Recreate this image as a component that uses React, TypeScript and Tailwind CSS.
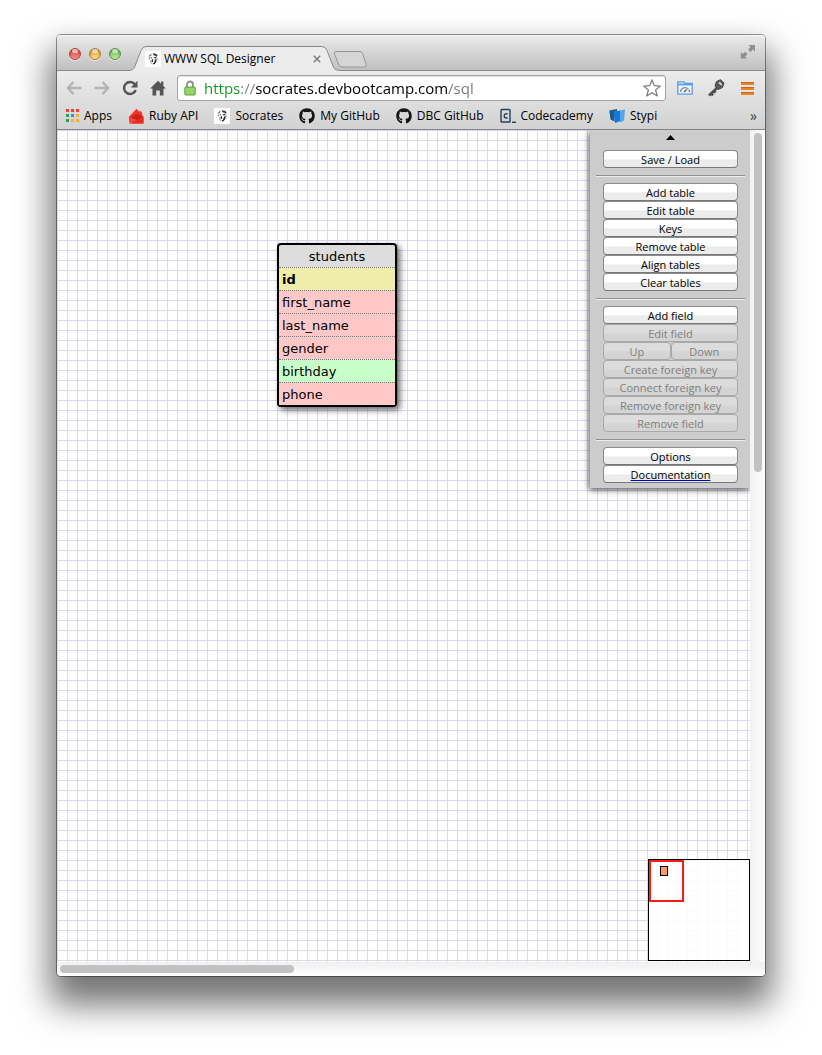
import type { ReactNode } from "react";
import { FaGithub } from "react-icons/fa";

const ui = "font-['Open_Sans','Noto_Sans',sans-serif]";

function TrafficLight({ label, className }: { label: string; className: string }) {
  return (
    <button
      type="button"
      aria-label={label}
      className={`relative size-3 rounded-full border shadow-[0_1px_0_#ffffff99,inset_0_1px_2px_#00000055] ${className}`}
    >
      <span className="absolute left-[2px] top-0 h-[4px] w-[6px] rounded-full bg-white/60" />
    </button>
  );
}

function PortraitIcon() {
  return (
    <svg viewBox="0 0 16 16" className="size-4 shrink-0 bg-white" aria-hidden="true">
      <path d="M3.500 5 5.500 3l1.500.5-1 1.500-1.500.7zM3.500 6.500l1.300-.3.4 1.800-1.200.3z" fill="#888" />
      <path d="M7.500 2.800c2-.8 4.400-.2 5 1.700l-.6 1.500-1.200-1.200-1.700-.4zM5.800 6.200l1.500.2-.2.900-1.200.2zM9 6.300l2-.5.3 1.200-1.500.8z" fill="#333" />
      <path d="m6.800 8.500 1-.5.4 2.300-.9.900-.8-.8zM10 8.800l1.600-1-.2 2.600-1.600 2.500-1.700.7-.4-1 1.400-.8z" fill="#222" />
      <path d="m5 9 1 2 .8 2.200-1.300-1.500zM11.800 6.500l.8.500-.3 2zM8.300 5.500l.6 3" fill="#999" stroke="#aaa" strokeWidth=".4" />
    </svg>
  );
}

function AppsIcon() {
  const colors = ["#ee3f3a", "#ee3f3a", "#ee3f3a", "#2f9e58", "#2f8cf0", "#fbb02c", "#2f9e58", "#fbb02c", "#fbb02c"];
  return (
    <svg viewBox="0 0 14 14" className="size-3.5 shrink-0" aria-hidden="true">
      {colors.map((c, i) => (
        <rect key={i} x={(i % 3) * 5 + 1} y={Math.floor(i / 3) * 5} width="3" height="3" fill={c} />
      ))}
    </svg>
  );
}

function RubyIcon() {
  return (
    <svg viewBox="0 0 16 16" className="size-4 shrink-0" aria-hidden="true">
      <path d="M.8 9 8.500.8l3 3.200L12 2.500l2 2 .5 3.500 1 .5V15.500H1.500z" fill="#f4352a" />
      <path d="m3 9 6-3.500L14.500 8 12 14H3z" fill="#cf201a" />
      <path d="m9 12 6.500-3.500v7H2.500z" fill="#e82c22" />
      <path d="M1.500 9.500 9 12l-6.500 3.500z" fill="#f4483a" />
    </svg>
  );
}

function CodecademyIcon() {
  return (
    <svg viewBox="0 0 16 16" className="size-4 shrink-0" fill="none" stroke="#23405a" aria-hidden="true">
      <rect x="1" y="1.500" width="9" height="12.500" rx=".8" strokeWidth="1.400" />
      <path d="M7.600 6.300c-1.200-1-3.400-.5-3.400 1.600s2.200 2.700 3.400 1.600" strokeWidth="1.400" />
      <path d="M12 14.300h4" strokeWidth="1.400" />
    </svg>
  );
}

function StypiIcon() {
  return (
    <svg viewBox="0 0 16 16" className="size-4 shrink-0" aria-hidden="true">
      <path d="M.3 2.500 8 1v2L5.500 4v9.500L1.500 11.500z" fill="#1b5a93" />
      <path d="m4.500 3.500 7-1v10.500L6 15z" fill="#1379d8" />
      <path d="m11 2.500 5-1-1 11-4 2z" fill="#56a4ea" />
    </svg>
  );
}

function ArrowIcon({ flip }: { flip?: boolean }) {
  return (
    <svg viewBox="0 0 16 14" className={flip ? "h-3.5 w-4 -scale-x-100" : "h-3.5 w-4"} fill="none" stroke="#b4b4b4" strokeWidth="2.400" aria-hidden="true">
      <path d="M7.500 1 1.800 7l5.700 6M2 7h13.500" />
    </svg>
  );
}

function Bookmark({ icon, label }: { icon: ReactNode; label: string }) {
  return (
    <a href="#" className="flex items-center gap-[5px] whitespace-nowrap">
      {icon}
      {label}
    </a>
  );
}

const fields = [
  { name: "id", style: "bg-[#eeeeaa] font-bold" },
  { name: "first_name", style: "bg-[#ffc8c8]" },
  { name: "last_name", style: "bg-[#ffc8c8]" },
  { name: "gender", style: "bg-[#ffc8c8]" },
  { name: "birthday", style: "bg-[#c8ffc8]" },
  { name: "phone", style: "bg-[#ffc8c8]" },
];

const panelControl =
  "flex h-[18px] flex-1 items-center justify-center rounded-[4px] border border-[#8c8c8c] border-b-[#777] bg-linear-to-b from-white from-50% to-[#ececec] to-55% text-[11px] leading-none whitespace-nowrap text-black disabled:border-[#a9a9a9] disabled:from-[#dcdcdc] disabled:to-[#d4d4d4] disabled:text-[#808080]";

function PanelButton({ children, disabled }: { children: ReactNode; disabled?: boolean }) {
  return (
    <button type="button" disabled={disabled} className={panelControl}>
      {children}
    </button>
  );
}

function Divider() {
  return <hr className="-mx-[7px] mt-[7px] mb-[6px] border-t border-b border-t-[#8f8f8f] border-b-[#eeeeee]" />;
}

function Row({ children }: { children: ReactNode }) {
  return <div className="flex">{children}</div>;
}

function ToolPanel() {
  return (
    <aside className={`absolute top-0 right-0 w-40 bg-[#cccccc] pr-3 pb-[5px] pl-[13px] shadow-[-1px_2px_6px_#000000aa] [clip-path:inset(0_0_-12px_-12px)] ${ui}`}>
      <button type="button" aria-label="Collapse panel" className="flex h-5 w-full items-start justify-center pt-[5px]">
        <svg viewBox="0 0 9 5" className="h-[5px] w-[9px]" aria-hidden="true">
          <path d="M4.500 0 9 5H0z" />
        </svg>
      </button>
      <Row><PanelButton>Save / Load</PanelButton></Row>
      <Divider />
      {["Add table", "Edit table", "Keys", "Remove table", "Align tables", "Clear tables"].map((l) => (
        <Row key={l}><PanelButton>{l}</PanelButton></Row>
      ))}
      <Divider />
      <Row><PanelButton>Add field</PanelButton></Row>
      <Row><PanelButton disabled>Edit field</PanelButton></Row>
      <Row>
        <PanelButton disabled>Up</PanelButton>
        <PanelButton disabled>Down</PanelButton>
      </Row>
      {["Create foreign key", "Connect foreign key", "Remove foreign key", "Remove field"].map((l) => (
        <Row key={l}><PanelButton disabled>{l}</PanelButton></Row>
      ))}
      <Divider />
      <Row><PanelButton>Options</PanelButton></Row>
      <Row>
        <a href="#" className={`${panelControl} underline decoration-[#0000cc]`}>Documentation</a>
      </Row>
    </aside>
  );
}

export default function App() {
  return (
    <div className="flex min-h-screen bg-white px-[57px] pt-[35px] pb-[79px]">
      <div className={`flex min-w-0 flex-1 flex-col rounded-[4px] shadow-[0_0_0_1px_#00000066,0_22px_34px_7px_#0000008c] ${ui}`}>
        <header className="flex h-9 items-start rounded-t-[4px] border-b border-[#8a8a8a] bg-linear-to-b from-[#ebebeb] to-[#c0c0c0] shadow-[inset_0_1px_0_#f6f6f6]">
          <div className="flex gap-2 pt-[13px] pl-3">
            <TrafficLight label="Close window" className="border-[#b0403f] bg-linear-to-b from-[#d9433f] to-[#ff8f88]" />
            <TrafficLight label="Minimize window" className="border-[#b37c30] bg-linear-to-b from-[#e09a35] to-[#ffdf80]" />
            <TrafficLight label="Zoom window" className="border-[#5c8c48] bg-linear-to-b from-[#6cb154] to-[#bdf09a]" />
          </div>
          <div className="relative ml-2 h-9 w-[212px]">
            <svg viewBox="0 0 212 36" className="absolute inset-0 h-9 w-[212px]" aria-hidden="true">
              <path d="M0 35.500C4 35 5 34 6 31L12 15.500Q13.500 11.500 17 11.500H193Q196.500 11.500 198 15.500L204 31C205 34 206 35 211 35.500V36H0z" fill="#ececec" />
              <path d="M0 35.500C4 35 5 34 6 31L12 15.500Q13.500 11.500 17 11.500H193Q196.500 11.500 198 15.500L204 31C205 34 206 35 211 35.500" fill="none" stroke="#8a8a8a" />
            </svg>
            <div className="relative flex h-9 items-center gap-[3px] pt-3 pr-5 pl-4 text-[12px] leading-none">
              <PortraitIcon />
              <span className="whitespace-nowrap">WWW SQL Designer</span>
              <button type="button" aria-label="Close tab" className="ml-auto">
                <svg viewBox="0 0 8 8" className="size-2" stroke="#808080" strokeWidth="1.600" aria-hidden="true">
                  <path d="m.8.8 6.400 6.400M7.200.8.8 7.200" />
                </svg>
              </button>
            </div>
          </div>
          <button type="button" aria-label="New tab" className="-ml-2 pt-4">
            <svg viewBox="0 0 34 17" className="h-[17px] w-[34px]" aria-hidden="true">
              <path d="M3 .5h24q2 0 2.700 2l3.500 11q.8 2.500-2 2.500H9q-2 0-3-2L1.500 3Q.8.500 3 .500z" fill="#d5d5d5" stroke="#969696" />
            </svg>
          </button>
          <button type="button" aria-label="Full screen" className="mt-[9px] mr-[9px] ml-auto">
            <svg viewBox="0 0 16 15" className="h-[15px] w-4" fill="#8f8f8f" aria-hidden="true">
              <path d="M8.500 1H15v6.500l-2-2L10.500 8 8 5.500 10.500 3zM7 14.500H.8V8l2 2L5 7.800l2.500 2.500L5 12.500z" />
            </svg>
          </button>
        </header>

        <nav className="border-b border-[#858585] bg-linear-to-b from-[#ececec] to-[#d2d2d2]">
          <div className="flex h-[34px] items-center pr-[11px] pl-[9px]">
            <button type="button" aria-label="Back"><ArrowIcon /></button>
            <button type="button" aria-label="Forward" className="ml-3"><ArrowIcon flip /></button>
            <button type="button" aria-label="Reload" className="ml-3">
              <svg viewBox="0 0 16 16" className="size-4" aria-hidden="true">
                <path d="M12.800 4.300A6 6 0 1 0 13.700 10" fill="none" stroke="#555" strokeWidth="2.500" />
                <path d="M15.500.8V7.500H8.800z" fill="#555" />
              </svg>
            </button>
            <button type="button" aria-label="Home" className="ml-3">
              <svg viewBox="0 0 16 16" className="size-4" fill="#555" aria-hidden="true">
                <path d="M8 .8 11 3.700V1.500h2.300V6L15.800 8.500H13.500V15.500H9.800V10.500H6.200V15.500H2.500V8.500H.2z" />
              </svg>
            </button>
            <div className="ml-[11px] flex h-[26px] min-w-0 flex-1 items-center rounded-[3px] border border-[#a5a5a5] bg-white pr-1 pl-[6px] shadow-[inset_0_1px_1px_#00000022]">
              <svg viewBox="0 0 12 16" className="h-4 w-3 shrink-0" aria-hidden="true">
                <path d="M3 8V4.500a3 3 0 0 1 6 0V8" fill="none" stroke="#8e8e8e" strokeWidth="1.800" />
                <rect x=".8" y="7" width="10.400" height="8" rx=".8" fill="#8bcb5f" stroke="#5fa53c" />
                <path d="M1.500 9h9M1.500 11h9M1.500 13h9" stroke="#a9df80" strokeWidth=".8" />
              </svg>
              <input
                type="text"
                aria-label="Address"
                defaultValue="https://socrates.devbootcamp.com/sql"
                className="ml-2 h-6 min-w-0 flex-1 bg-[linear-gradient(90deg,#0b9a20_37px,#808080_37px,#808080_51px,#000_51px,#000_244px,#777_244px)] bg-clip-text text-[15px] text-transparent caret-black outline-none"
              />
              <button type="button" aria-label="Bookmark this page">
                <svg viewBox="0 0 18 18" className="size-[18px]" fill="white" stroke="#7a7a7a" strokeWidth="1.200" strokeLinejoin="round" aria-hidden="true">
                  <path d="m9 .9 2.300 5.800 6 .4-4.700 3.900 1.600 6L9 13.700 3.800 17l1.600-6L.7 7.100l6-.4z" />
                </svg>
              </button>
            </div>
            <button type="button" aria-label="Page speed" className="ml-[11px]">
              <svg viewBox="0 0 16 14" className="h-3.5 w-4" aria-hidden="true">
                <path d="M.8.800h6l1 1.500H15.200V13.200H.8z" fill="#eef4fc" stroke="#5b9ae8" strokeWidth="1.300" />
                <path d="M.8 3.500h14.400" stroke="#5b9ae8" strokeWidth="1.800" />
                <path d="M3.500 11a4.600 4.600 0 0 1 8-2.800" fill="none" stroke="#7792b5" strokeWidth="1.300" />
                <path d="M7 11 9.800 8.500" stroke="#555" strokeWidth="1.200" />
                <path d="m12 9 .6 2" stroke="#e2503c" strokeWidth="1.400" />
              </svg>
            </button>
            <button type="button" aria-label="Key tool" className="ml-[14px]">
              <svg viewBox="0 0 18 18" className="size-[18px]" aria-hidden="true">
                <path d="M10.500 8.500 2 16.500M4.500 14.500l1.500 1.800M7 12l1.600 1.700" stroke="#505050" strokeWidth="2.600" />
                <path d="m9.500 2.500 4-1.800L17 4l-1.500 4.500L11 10.500 8 7z" fill="#5a5a5a" stroke="#474747" />
                <path d="m12 3.500 2.800 2.300" stroke="#dedede" strokeWidth="1.700" />
              </svg>
            </button>
            <button type="button" aria-label="Menu" className="ml-4">
              <svg viewBox="0 0 13 13" className="size-[13px]" aria-hidden="true">
                <path d="M0 1.500h13M0 6.500h13M0 11.500h13" stroke="#ee8420" strokeWidth="3" />
                <path d="M0 .5h13M0 5.500h13M0 10.500h13" stroke="#d5621a" />
              </svg>
            </button>
          </div>
          <div className="flex h-6 items-center gap-4 pr-2 pb-[3px] pl-2 text-[12px] leading-none">
            <Bookmark icon={<AppsIcon />} label="Apps" />
            <Bookmark icon={<RubyIcon />} label="Ruby API" />
            <Bookmark icon={<PortraitIcon />} label="Socrates" />
            <Bookmark icon={<FaGithub className="size-4" color="#151515" />} label="My GitHub" />
            <Bookmark icon={<FaGithub className="size-4" color="#151515" />} label="DBC GitHub" />
            <Bookmark icon={<CodecademyIcon />} label="Codecademy" />
            <Bookmark icon={<StypiIcon />} label="Stypi" />
            <button type="button" aria-label="More bookmarks" className="ml-auto text-[14px] text-[#444]">»</button>
          </div>
        </nav>

        <div className="flex min-h-0 flex-1">
          <main className="relative min-w-0 flex-1 bg-white bg-[linear-gradient(#d9d9f2_1px,transparent_1px),linear-gradient(90deg,#d9d9f2_1px,transparent_1px)] bg-size-[10px_10px]">
            <table className="absolute top-[113px] left-[220px] w-[120px] border-separate border-spacing-0 rounded-[4px] border-2 border-black bg-[#dddddd] font-['DejaVu_Sans',sans-serif] text-[13px] leading-[20px] shadow-[3px_3px_6px_#00000099]">
              <thead>
                <tr><th className="px-0 pt-[2px] pb-0 text-center font-normal">students</th></tr>
              </thead>
              <tbody>
                {fields.map((f) => (
                  <tr key={f.name}>
                    <td className={`border-t border-dotted border-[#777] pt-[2px] pr-0 pb-0 pl-[3px] ${f.style}`}>{f.name}</td>
                  </tr>
                ))}
              </tbody>
            </table>
            <ToolPanel />
            <div className="absolute right-0 bottom-px size-[102px] border border-black bg-white/90">
              <div className="h-[42px] w-[35px] border-2 border-[#ff1a1a] pt-1 pl-[9px]">
                <div className="h-[10px] w-2 border border-black bg-[#ff9966]" />
              </div>
            </div>
          </main>
          <div className="flex w-[15px] justify-center bg-linear-to-r from-[#f2f2f2] to-[#fcfcfc] pt-[3px]">
            <div className="h-[339px] w-2 rounded-full bg-[#c2c2c2]" />
          </div>
        </div>
        <div className="flex h-[14px] rounded-b-[4px] bg-linear-to-b from-[#f0f0f0] to-[#fdfdfd] pt-[3px] pl-[3px]">
          <div className="h-2 w-[234px] rounded-full bg-[#c2c2c2]" />
        </div>
      </div>
    </div>
  );
}
